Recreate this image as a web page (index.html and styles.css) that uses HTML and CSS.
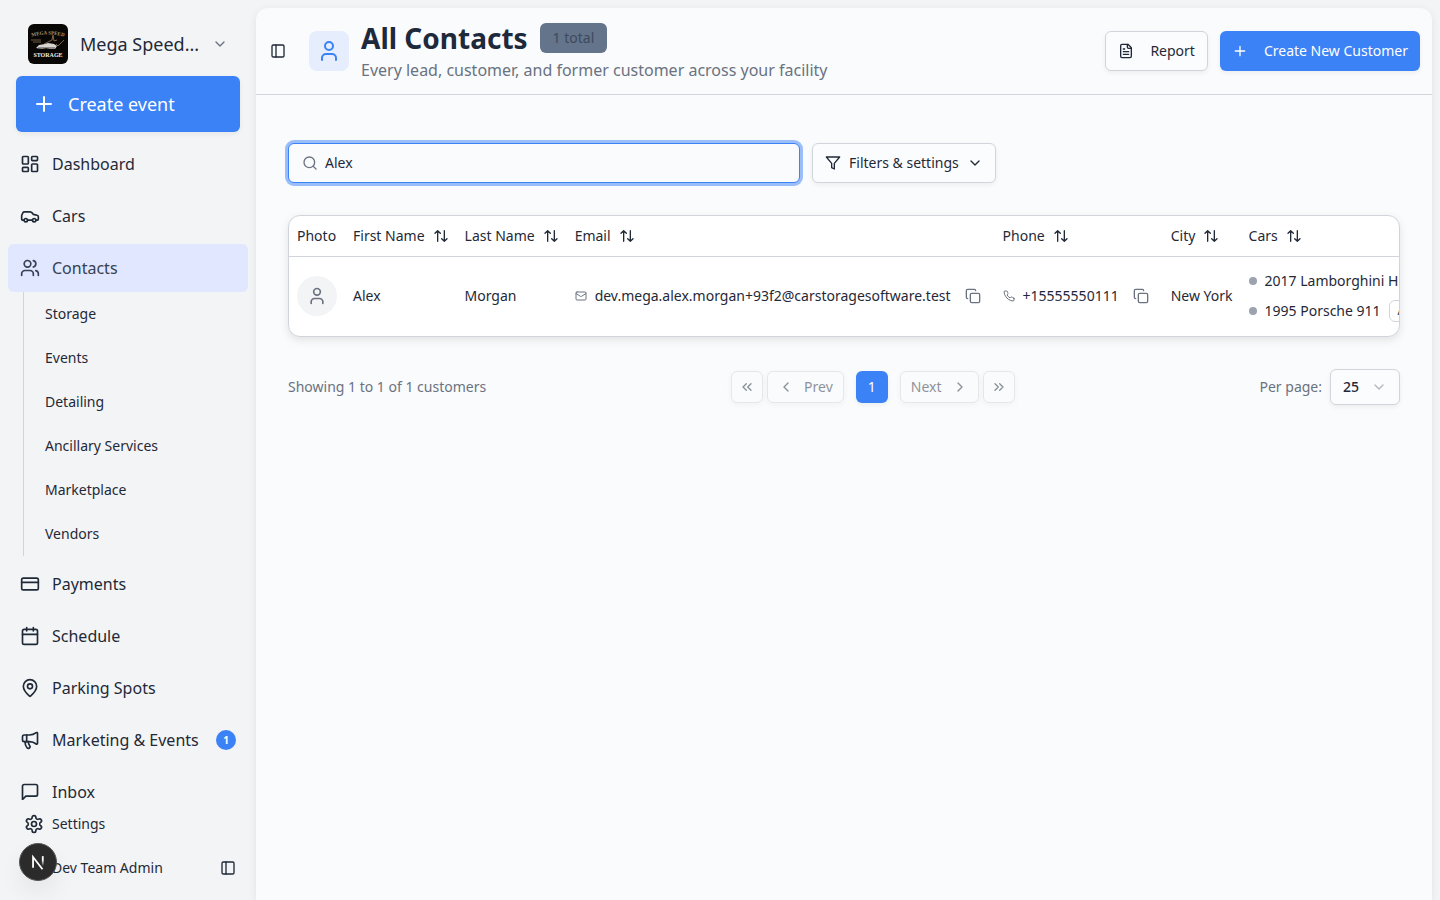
FILE: index.html
```html
<!DOCTYPE html>
<html lang="en">
<head>
<meta charset="UTF-8">
<meta name="viewport" content="width=device-width, initial-scale=1.0">
<title>All Contacts</title>
<link rel="stylesheet" href="styles.css">
</head>
<body>
<!-- shared icons -->
<svg class="sprite" aria-hidden="true">
    <symbol id="i-plus" viewBox="0 0 24 24"><path d="M5 12h14M12 5v14"/></symbol>
    <symbol id="i-down" viewBox="0 0 24 24"><path d="m6 9 6 6 6-6"/></symbol>
    <symbol id="i-sort" viewBox="0 0 24 24"><path d="m3 8 4-4 4 4M7 4v16M21 16l-4 4-4-4M17 20V4"/></symbol>
    <symbol id="i-copy" viewBox="0 0 24 24"><rect width="14" height="14" x="8" y="8" rx="2"/><path d="M4 16c-1.1 0-2-.9-2-2V4c0-1.1.9-2 2-2h10c1.1 0 2 .9 2 2"/></symbol>
    <symbol id="i-panel" viewBox="0 0 24 24"><rect width="18" height="18" x="3" y="3" rx="2"/><path d="M9 3v18"/></symbol>
    <symbol id="i-user" viewBox="0 0 24 24"><path d="M19 21v-2a4 4 0 0 0-4-4H9a4 4 0 0 0-4 4v2"/><circle cx="12" cy="7" r="4"/></symbol>
</svg>
<div class="layout">
    <aside class="sidebar">
        <button class="facility">
            <svg class="logo" viewBox="0 0 40 40" role="img" aria-label="Mega Speed Storage">
                <rect width="40" height="40" rx="6" fill="#080706"/>
                <path id="arc" d="M2 13Q20 8 38 13" fill="none"/>
                <text class="logo-top" text-anchor="middle"><textPath href="#arc" startOffset="50%">MEGA SPEED</textPath></text>
                <path d="M3 16h10M5 18h8" stroke="#6f5a3c" stroke-width="1"/>
                <path d="M16 20l8-4 1-5 1 6 3-1M28 20l2 2 6-6" fill="none" stroke="#7d6746" stroke-width="1"/>
                <path d="M8 24l3-3 6-1 3-1 6 1 3 2-2 3h-5l-4-1-4 1z" fill="#d8d6d0"/>
                <path d="M10 24h17" stroke="#444" stroke-width="1"/>
                <text class="logo-bottom" x="20" y="33" text-anchor="middle">STORAGE</text>
            </svg>
            <span class="facility-name">Mega Speed...</span>
            <svg class="icon sm muted"><use href="#i-down"/></svg>
        </button>
        <button class="create-event"><svg class="icon lg"><use href="#i-plus"/></svg>Create event</button>
        <nav class="nav">
            <a class="nav-item" href="#"><svg class="icon" viewBox="0 0 24 24"><rect width="7" height="9" x="3" y="3" rx="1"/><rect width="7" height="5" x="14" y="3" rx="1"/><rect width="7" height="9" x="14" y="12" rx="1"/><rect width="7" height="5" x="3" y="16" rx="1"/></svg>Dashboard</a>
            <a class="nav-item" href="#"><svg class="icon" viewBox="0 0 24 24"><path d="M19 17h2c.6 0 1-.4 1-1v-3c0-.9-.7-1.700-1.500-1.900C18.700 10.600 16 10 16 10s-1.300-1.400-2.200-2.300c-.5-.4-1.100-.7-1.800-.7H5c-.6 0-1.100.4-1.400.9l-1.400 2.900A3.700 3.700 0 0 0 2 12v4c0 .6.4 1 1 1h2"/><circle cx="7" cy="17" r="2"/><path d="M9 17h6"/><circle cx="17" cy="17" r="2"/></svg>Cars</a>
            <a class="nav-item active" href="#"><svg class="icon" viewBox="0 0 24 24"><path d="M16 21v-2a4 4 0 0 0-4-4H6a4 4 0 0 0-4 4v2"/><circle cx="9" cy="7" r="4"/><path d="M22 21v-2a4 4 0 0 0-3-3.870M16 3.130a4 4 0 0 1 0 7.750"/></svg>Contacts</a>
            <div class="subnav">
                <a href="#">Storage</a>
                <a href="#">Events</a>
                <a href="#">Detailing</a>
                <a href="#">Ancillary Services</a>
                <a href="#">Marketplace</a>
                <a href="#">Vendors</a>
            </div>
            <a class="nav-item" href="#"><svg class="icon" viewBox="0 0 24 24"><rect width="20" height="14" x="2" y="5" rx="2"/><path d="M2 10h20"/></svg>Payments</a>
            <a class="nav-item" href="#"><svg class="icon" viewBox="0 0 24 24"><path d="M8 2v4M16 2v4"/><rect width="18" height="18" x="3" y="4" rx="2"/><path d="M3 10h18"/></svg>Schedule</a>
            <a class="nav-item" href="#"><svg class="icon" viewBox="0 0 24 24"><path d="M20 10c0 4.990-5.540 10.190-7.400 11.800a1 1 0 0 1-1.200 0C9.540 20.190 4 14.990 4 10a8 8 0 0 1 16 0"/><circle cx="12" cy="10" r="3"/></svg>Parking Spots</a>
            <a class="nav-item" href="#"><svg class="icon" viewBox="0 0 24 24"><path d="M11 6a13 13 0 0 0 8.400-2.800A1 1 0 0 1 21 4v12a1 1 0 0 1-1.600.8A13 13 0 0 0 11 14H5a2 2 0 0 1-2-2V8a2 2 0 0 1 2-2z"/><path d="M6 14a12 12 0 0 0 2.400 7.200 2 2 0 0 0 3.200-2.400A8 8 0 0 1 10 14M8 6v8"/></svg>Marketing &amp; Events<span class="count">1</span></a>
            <a class="nav-item" href="#"><svg class="icon" viewBox="0 0 24 24"><path d="M21 15a2 2 0 0 1-2 2H7l-4 4V5a2 2 0 0 1 2-2h14a2 2 0 0 1 2 2z"/></svg>Inbox</a>
        </nav>
        <div class="sidebar-footer">
            <a class="settings" href="#"><svg class="icon" viewBox="0 0 24 24"><path d="M12.220 2h-.44a2 2 0 0 0-2 2v.18a2 2 0 0 1-1 1.730l-.43.25a2 2 0 0 1-2 0l-.15-.08a2 2 0 0 0-2.730.73l-.22.38a2 2 0 0 0 .73 2.730l.15.1a2 2 0 0 1 1 1.720v.51a2 2 0 0 1-1 1.740l-.15.09a2 2 0 0 0-.73 2.730l.22.38a2 2 0 0 0 2.730.73l.15-.08a2 2 0 0 1 2 0l.43.25a2 2 0 0 1 1 1.730V20a2 2 0 0 0 2 2h.44a2 2 0 0 0 2-2v-.18a2 2 0 0 1 1-1.730l.43-.25a2 2 0 0 1 2 0l.15.08a2 2 0 0 0 2.730-.73l.22-.39a2 2 0 0 0-.73-2.730l-.15-.08a2 2 0 0 1-1-1.740v-.5a2 2 0 0 1 1-1.740l.15-.09a2 2 0 0 0 .73-2.730l-.22-.38a2 2 0 0 0-2.730-.73l-.15.08a2 2 0 0 1-2 0l-.43-.25a2 2 0 0 1-1-1.730V4a2 2 0 0 0-2-2z"/><circle cx="12" cy="12" r="3"/></svg>Settings</a>
            <div class="account">
                <a href="#">Dev Team Admin</a>
                <button class="plain" aria-label="Toggle sidebar"><svg class="icon sm"><use href="#i-panel"/></svg></button>
            </div>
        </div>
    </aside>

    <main class="main">
        <header class="page-header">
            <button class="plain toggle" aria-label="Toggle sidebar"><svg class="icon sm"><use href="#i-panel"/></svg></button>
            <span class="page-icon"><svg class="icon lg"><use href="#i-user"/></svg></span>
            <div class="page-title">
                <div class="title-row">
                    <h1>All Contacts</h1>
                    <span class="total">1 total</span>
                </div>
                <p>Every lead, customer, and former customer across your facility</p>
            </div>
            <div class="actions">
                <button class="btn"><svg class="icon sm" viewBox="0 0 24 24"><path d="M15 2H6a2 2 0 0 0-2 2v16a2 2 0 0 0 2 2h12a2 2 0 0 0 2-2V7z"/><path d="M14 2v4a2 2 0 0 0 2 2h4M10 9H8M16 13H8M16 17H8"/></svg>Report</button>
                <button class="btn primary"><svg class="icon sm"><use href="#i-plus"/></svg>Create New Customer</button>
            </div>
        </header>

        <div class="content">
            <div class="toolbar">
                <label class="search">
                    <svg class="icon sm muted" viewBox="0 0 24 24"><circle cx="11" cy="11" r="8"/><path d="m21 21-4.300-4.300"/></svg>
                    <input type="text" value="Alex" aria-label="Search contacts">
                </label>
                <button class="btn filters"><svg class="icon sm" viewBox="0 0 24 24"><path d="M22 3H2l8 9.460V19l4 2v-8.540z"/></svg>Filters &amp; settings<svg class="icon sm"><use href="#i-down"/></svg></button>
            </div>

            <div class="table-card">
                <table>
                    <thead>
                        <tr>
                            <th>Photo</th>
                            <th><button class="sort">First Name<svg class="icon sm"><use href="#i-sort"/></svg></button></th>
                            <th><button class="sort">Last Name<svg class="icon sm"><use href="#i-sort"/></svg></button></th>
                            <th><button class="sort">Email<svg class="icon sm"><use href="#i-sort"/></svg></button></th>
                            <th><button class="sort">Phone<svg class="icon sm"><use href="#i-sort"/></svg></button></th>
                            <th><button class="sort">City<svg class="icon sm"><use href="#i-sort"/></svg></button></th>
                            <th><button class="sort">Cars<svg class="icon sm"><use href="#i-sort"/></svg></button></th>
                        </tr>
                    </thead>
                    <tbody>
                        <tr>
                            <td><span class="avatar"><svg class="icon"><use href="#i-user"/></svg></span></td>
                            <td>Alex</td>
                            <td>Morgan</td>
                            <td>
                                <div class="contact">
                                    <svg class="icon xs muted" viewBox="0 0 24 24"><rect width="20" height="16" x="2" y="4" rx="2"/><path d="m22 7-8.970 5.700a1.940 1.940 0 0 1-2.060 0L2 7"/></svg>
                                    <span>dev.mega.alex.morgan+93f2@carstoragesoftware.test</span>
                                    <button class="copy" aria-label="Copy email"><svg class="icon sm"><use href="#i-copy"/></svg></button>
                                </div>
                            </td>
                            <td>
                                <div class="contact">
                                    <svg class="icon xs muted" viewBox="0 0 24 24"><path d="M22 16.920v3a2 2 0 0 1-2.180 2 19.790 19.790 0 0 1-8.630-3.070 19.500 19.500 0 0 1-6-6 19.790 19.790 0 0 1-3.070-8.670A2 2 0 0 1 4.110 2h3a2 2 0 0 1 2 1.720 12.840 12.840 0 0 0 .7 2.810 2 2 0 0 1-.45 2.110L8.090 9.910a16 16 0 0 0 6 6l1.270-1.270a2 2 0 0 1 2.110-.45 12.840 12.840 0 0 0 2.810.7A2 2 0 0 1 22 16.920z"/></svg>
                                    <span>+15555550111</span>
                                    <button class="copy" aria-label="Copy phone"><svg class="icon sm"><use href="#i-copy"/></svg></button>
                                </div>
                            </td>
                            <td>New York</td>
                            <td>
                                <div class="cars">
                                    <div class="car"><span class="dot"></span>2017 Lamborghini Huracan</div>
                                    <div class="car"><span class="dot"></span>1995 Porsche 911<span class="tag">A1</span></div>
                                </div>
                            </td>
                        </tr>
                    </tbody>
                </table>
            </div>

            <div class="table-footer">
                <span>Showing 1 to 1 of 1 customers</span>
                <div class="pager">
                    <button class="page-btn square" disabled aria-label="First page"><svg class="icon sm" viewBox="0 0 24 24"><path d="m11 17-5-5 5-5M18 17l-5-5 5-5"/></svg></button>
                    <button class="page-btn" disabled><svg class="icon sm" viewBox="0 0 24 24"><path d="m15 18-6-6 6-6"/></svg>Prev</button>
                    <button class="page-btn square current">1</button>
                    <button class="page-btn" disabled>Next<svg class="icon sm" viewBox="0 0 24 24"><path d="m9 18 6-6-6-6"/></svg></button>
                    <button class="page-btn square" disabled aria-label="Last page"><svg class="icon sm" viewBox="0 0 24 24"><path d="m6 17 5-5-5-5M13 17l5-5-5-5"/></svg></button>
                </div>
                <div class="per-page">
                    <label for="size">Per page:</label>
                    <div class="select">
                        <select id="size">
                            <option>25</option>
                            <option>50</option>
                        </select>
                        <svg class="icon sm"><use href="#i-down"/></svg>
                    </div>
                </div>
            </div>
        </div>
    </main>
</div>
<button class="dev-badge" aria-label="Developer tools">
    <svg viewBox="0 0 40 40">
        <defs>
            <linearGradient id="fade" x1="0" y1="0" x2="0" y2="1"><stop offset="0.400" stop-color="#fff"/><stop offset="1" stop-color="#fff" stop-opacity="0"/></linearGradient>
        </defs>
        <path d="M14.500 26.500V14.500L25 28" fill="none" stroke="#fff" stroke-width="2"/>
        <rect x="24.300" y="13.500" width="2" height="11" fill="url(#fade)"/>
    </svg>
</button>
</body>
</html>
```
FILE: styles.css
```css
*{
    box-sizing: border-box;
}
body{
    margin: 0;
    background: #f3f4f6;
    color: #1f2937;
    font: 14px/20px "Noto Sans", sans-serif;
}
a{
    color: inherit;
    text-decoration: none;
}
button, input, select{
    font: inherit;
    color: inherit;
    margin: 0;
}
button{
    display: flex;
    align-items: center;
    padding: 0;
    border: 0;
    background: none;
    white-space: nowrap;
}
h1, p{
    margin: 0;
}
.sprite{
    display: none;
}
.icon{
    width: 20px;
    height: 20px;
    flex: none;
    fill: none;
    stroke: currentColor;
    stroke-width: 2;
    stroke-linecap: round;
    stroke-linejoin: round;
}
.icon.lg{
    width: 24px;
    height: 24px;
}
.icon.sm{
    width: 16px;
    height: 16px;
}
.icon.xs{
    width: 12px;
    height: 12px;
}
.muted{
    color: #6b7280;
}
.layout{
    display: flex;
    height: 100vh;
    overflow: hidden;
}

/* sidebar */
.sidebar{
    display: flex;
    flex-direction: column;
    width: 256px;
    flex: none;
}
.facility{
    gap: 12px;
    margin: 24px 28px 12px;
    font-size: 18px;
    line-height: 28px;
}
.facility-name{
    flex: 1;
    text-align: left;
}
.logo{
    width: 40px;
    height: 40px;
}
.logo-top{
    font: bold 5px "Liberation Serif", serif;
    fill: #b0966c;
}
.logo-bottom{
    font: bold 6px "Liberation Serif", serif;
    fill: #f1efea;
}
.create-event{
    gap: 12px;
    height: 56px;
    flex: none;
    margin: 0 16px 8px;
    padding: 0 16px;
    border-radius: 6px;
    background: #3b82f6;
    color: #fff;
    font-size: 18px;
    box-shadow: 0 2px 5px rgba(0,0,0,.06);
}
.nav{
    display: flex;
    flex-direction: column;
    gap: 4px;
    flex: 1;
    min-height: 0;
    overflow: hidden;
    padding: 0 8px;
}
.nav-item{
    display: flex;
    align-items: center;
    gap: 12px;
    height: 48px;
    flex: none;
    padding: 0 12px;
    border-radius: 6px;
    font-size: 16px;
}
.nav-item.active{
    background: #e0e7ff;
    color: #374151;
}
.subnav{
    margin: -4px 0 0 15px;
    border-left: 1px solid #d1d5db;
    padding-left: 21px;
}
.subnav a{
    display: block;
    line-height: 44px;
}
.count{
    width: 20px;
    height: 20px;
    margin-left: auto;
    border-radius: 50%;
    background: #3b82f6;
    color: #fff;
    font-size: 10px;
    font-weight: 700;
    text-align: center;
}
.sidebar-footer{
    flex: none;
    height: 100px;
    padding: 0 20px 0 24px;
}
.settings{
    display: flex;
    align-items: center;
    gap: 8px;
    height: 48px;
}
.account{
    display: flex;
    align-items: center;
    justify-content: space-between;
    height: 40px;
    padding-left: 28px;
}

/* main panel */
.main{
    flex: 1;
    min-width: 0;
    margin: 8px 8px 0 0;
    border-radius: 12px 12px 0 0;
    background: #f9fbfd;
    box-shadow: 0 2px 8px rgba(0,0,0,.08);
}
.page-header{
    display: flex;
    align-items: center;
    padding: 12px;
    border-bottom: 1px solid #d1d5db;
}
.toggle{
    padding: 2px;
}
.page-icon{
    display: flex;
    padding: 8px;
    margin: 0 12px 0 21px;
    border-radius: 8px;
    background: #e6edfd;
    color: #3b82f6;
}
.title-row{
    display: flex;
    align-items: center;
    gap: 12px;
    margin-bottom: 2px;
}
h1{
    color: #1e293b;
    font-size: 28px;
    line-height: 36px;
    font-weight: 700;
}
.total{
    padding: 5px 13px;
    border-radius: 6px;
    background: #64748b;
    color: #3d4a5e;
}
.page-title p{
    color: #6b7280;
    font-size: 16px;
    line-height: 24px;
}
.actions{
    display: flex;
    gap: 12px;
    margin-left: auto;
}
.btn{
    gap: 16px;
    height: 40px;
    padding: 0 12px;
    border: 1px solid #d1d5db;
    border-radius: 6px;
    background: #fbfcfe;
    box-shadow: 0 2px 5px rgba(0,0,0,.06);
}
.btn.primary{
    border: 0;
    background: #3b82f6;
    color: #fff;
}
.btn.filters{
    gap: 8px;
}
.content{
    padding: 48px 32px;
}
.toolbar{
    display: flex;
    gap: 12px;
    margin-bottom: 32px;
}
.search{
    display: flex;
    align-items: center;
    gap: 7px;
    width: 512px;
    height: 40px;
    padding: 0 13px;
    border: 1px solid #3b82f6;
    border-radius: 6px;
    background: #f9fbfd;
    box-shadow: 0 0 0 3px rgba(59,130,246,.5);
}
.search input{
    flex: 1;
    min-width: 0;
    padding: 0;
    border: 0;
    outline: none;
    background: none;
}

/* table */
.table-card{
    overflow: hidden;
    border: 1px solid #d1d5db;
    border-radius: 12px;
    background: #fff;
    box-shadow: 0 3px 8px rgba(0,0,0,.1);
}
table{
    width: 100%;
    border-collapse: separate;
    border-spacing: 0;
    white-space: nowrap;
}
th, td{
    padding: 0 8px;
    text-align: left;
    font-weight: 400;
}
th{
    height: 41px;
    border-bottom: 1px solid #d1d5db;
}
td{
    height: 79px;
    padding-bottom: 1px;
}
.sort{
    gap: 8px;
}
.avatar{
    display: flex;
    align-items: center;
    justify-content: center;
    width: 40px;
    height: 40px;
    border-radius: 50%;
    background: #f3f4f6;
    color: #6b7280;
}
.contact{
    display: flex;
    align-items: center;
    gap: 8px;
}
.copy{
    padding: 6px;
    color: #6b7280;
}
.cars{
    display: grid;
    gap: 8px;
}
.car{
    display: flex;
    align-items: center;
    gap: 8px;
    height: 22px;
}
.dot{
    width: 8px;
    height: 8px;
    border-radius: 50%;
    background: #9ca3af;
}
.tag{
    height: 22px;
    padding: 0 8px;
    border: 1px solid #d1d5db;
    border-radius: 6px;
    font-size: 12px;
}

/* pagination */
.table-footer{
    display: flex;
    align-items: center;
    justify-content: space-between;
    margin-top: 32px;
    color: #6b7280;
}
.pager{
    display: flex;
    gap: 4px;
}
.page-btn{
    gap: 10px;
    height: 32px;
    padding: 0 10px;
    border: 1px solid #d1d5db;
    border-radius: 6px;
    box-shadow: 0 2px 5px rgba(0,0,0,.06);
    color: #1f2937;
}
.page-btn:disabled{
    opacity: .5;
}
.page-btn.square{
    justify-content: center;
    width: 32px;
    padding: 0;
}
.page-btn.current{
    margin: 0 8px;
    border: 0;
    background: #3b82f6;
    color: #fff;
}
.per-page{
    display: flex;
    align-items: center;
    gap: 8px;
}
.select{
    position: relative;
}
.select select{
    appearance: none;
    width: 70px;
    height: 36px;
    padding: 0 12px;
    border: 1px solid #d1d5db;
    border-radius: 6px;
    background: #fbfcfe;
    color: #1f2937;
    font-weight: 500;
    box-shadow: 0 2px 5px rgba(0,0,0,.06);
}
.select .icon{
    position: absolute;
    top: 10px;
    right: 13px;
    opacity: .5;
    pointer-events: none;
}

/* floating badge */
.dev-badge{
    position: fixed;
    left: 19px;
    bottom: 19px;
    width: 38px;
    height: 38px;
    border: 1px solid #555;
    border-radius: 50%;
    background: #2b2b2b;
    box-shadow: 0 12px 24px rgba(0,0,0,.06);
}
.dev-badge svg{
    width: 36px;
    height: 36px;
}
```
